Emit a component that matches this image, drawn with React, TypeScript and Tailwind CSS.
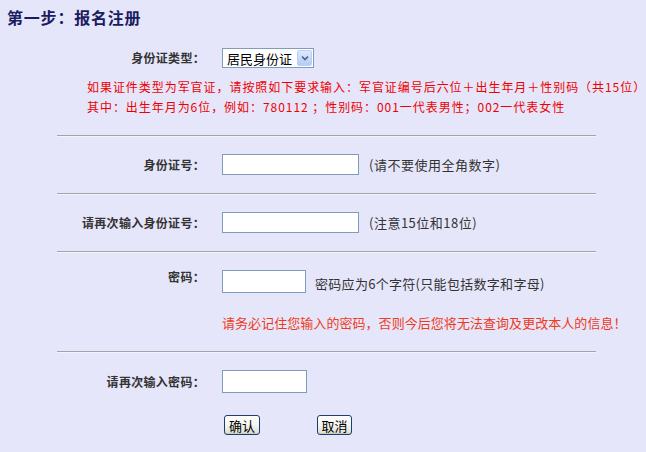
import React from 'react'

const FONT = '"Noto Sans CJK SC", "Liberation Sans", sans-serif'

function Label({ text }: { text: string }) {
  return (
    <div className="w-[205px] shrink-0 text-right text-[12px] leading-[14px] font-bold tracking-[0.3px] text-[#333333]">
      {text}
    </div>
  )
}

function TextBox({ width }: { width: string }) {
  return <div className={`${width} h-full shrink-0 border border-[#7f9db9] bg-white`} />
}

function Divider({ className }: { className: string }) {
  return <div className={`${className} ml-[57px] w-[539px] h-0 border-t border-t-[#a3a3a8] border-b border-b-[#f4f4ff]`} />
}

function XpButton({ text, className }: { text: string; className?: string }) {
  return (
    <div
      className={`${className ?? ''} flex h-[20px] items-center justify-center rounded-[3px] border border-[#1c3f6e] bg-linear-to-b from-white via-[#f5f5f1] to-[#dcdcd2] text-[13px] leading-none text-black shadow-[inset_0_-1px_0_#c9c9bf]`}
    >
      {text}
    </div>
  )
}

export default function App() {
  return (
    <div className="w-[646px] h-[452px] overflow-hidden bg-[#e6e6fa]" style={{ fontFamily: FONT }}>
      <h1 className="pt-[9px] pl-[7px] text-[16px] leading-[17px] font-bold tracking-[0.8px] text-[#1b1b5f]">
        第一步：报名注册
      </h1>

      {/* 证件类型 */}
      <div className="mt-[22px] flex h-[20px] items-center">
        <Label text="身份证类型：" />
        <div className="ml-[17px] flex h-[20px] w-[92px] items-center border border-[#7f9db9] bg-white">
          <span className="pl-[4px] text-[13px] leading-none text-black">居民身份证</span>
          <div className="ml-auto mr-[1px] flex h-[16px] w-[15px] items-center justify-center rounded-[2px] border border-[#b9cdf5] bg-linear-to-b from-[#dce8ff] to-[#b6ccf6]">
            <svg width="8" height="6" viewBox="0 0 8 6">
              <path d="M1 1.5 L4 4.5 L7 1.5" fill="none" stroke="#4d6185" strokeWidth="1.6" />
            </svg>
          </div>
        </div>
      </div>

      <div className="mt-[9px] pl-[87px] text-[12px] leading-[20px] tracking-[0.95px] text-[#ee0000] whitespace-nowrap">
        <div>如果证件类型为军官证，请按照如下要求输入：军官证编号后六位＋出生年月＋性别码（共15位）</div>
        <div>其中：出生年月为6位，例如：780112 ；性别码：001一代表男性；002一代表女性</div>
      </div>

      <Divider className="mt-[18px]" />

      {/* 身份证号 */}
      <div className="mt-[17px] flex h-[21px] items-center">
        <Label text="身份证号：" />
        <div className="ml-[17px] flex h-full items-center">
          <TextBox width="w-[137px]" />
          <span className="ml-[10px] text-[13px] tracking-[0.5px] text-[#333333]">(请不要使用全角数字)</span>
        </div>
      </div>

      <Divider className="mt-[18px]" />

      {/* 再次输入身份证号 */}
      <div className="mt-[17px] flex h-[21px] items-center">
        <Label text="请再次输入身份证号：" />
        <div className="ml-[17px] flex h-full items-center">
          <TextBox width="w-[137px]" />
          <span className="ml-[10px] text-[13px] tracking-[0.5px] text-[#333333]">(注意15位和18位)</span>
        </div>
      </div>

      <Divider className="mt-[18px]" />

      {/* 密码 */}
      <div className="mt-[17px] flex h-[23px] items-start">
        <Label text="密码：" />
        <div className="ml-[17px] flex h-full items-start">
          <TextBox width="w-[84px]" />
          <span className="ml-[9px] pt-[6px] text-[13px] leading-[16px] tracking-[0.3px] text-[#333333]">
            密码应为6个字符(只能包括数字和字母)
          </span>
        </div>
      </div>

      <div className="mt-[22px] pl-[222px] text-[13px] leading-[16px] tracking-[0.05px] text-[#ee3a1c] whitespace-nowrap">
        请务必记住您输入的密码，否则今后您将无法查询及更改本人的信息！
      </div>

      <Divider className="mt-[20px]" />

      {/* 再次输入密码 */}
      <div className="mt-[17px] flex h-[23px] items-center">
        <Label text="请再次输入密码：" />
        <div className="ml-[17px] flex h-full items-center">
          <TextBox width="w-[85px]" />
        </div>
      </div>

      <div className="mt-[22px] flex pl-[224px]">
        <XpButton text="确认" className="w-[36px]" />
        <XpButton text="取消" className="ml-[57px] w-[35px]" />
      </div>
    </div>
  )
}
